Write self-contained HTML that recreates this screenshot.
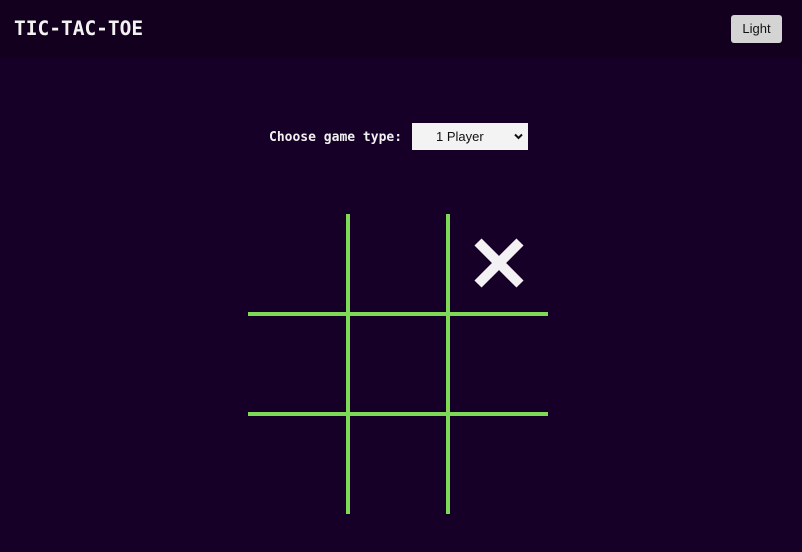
<!DOCTYPE html>
<html><head><style>
body{margin:0;width:802px;height:552px;background:#170027;overflow:hidden;font-family:"DejaVu Sans Mono","Liberation Mono",monospace}
.hdr{height:58px;background:#12001e;position:relative}
.t{position:absolute;left:14px;top:17px;color:#f2f2f2;font-weight:bold;font-size:19.5px}
.btn{position:absolute;left:731px;top:15px;width:51px;height:28px;background:#d4d4d4;border-radius:3px;font-family:"Liberation Sans",sans-serif;font-size:13px;color:#111;text-align:center;line-height:28px}
.lbl{position:absolute;left:269px;top:130px;color:#f0f0f0;font-weight:bold;font-size:13px}
.sel{position:absolute;left:412px;top:123px;width:116px;height:27px;background:#f3f3f3;font-family:"Liberation Sans",sans-serif;font-size:13px;color:#111}
.sel span{position:absolute;left:24px;top:6px}
.g{position:absolute;background:#7ed957}
</style></head><body>
<div class="hdr"><div class="t">TIC-TAC-TOE</div><div class="btn">Light</div></div>
<div class="lbl">Choose game type:</div>
<div class="sel"><span>1 Player</span><svg style="position:absolute;left:102px;top:10px" width="9" height="7" viewBox="0 0 9 7"><path d="M1 1.5L4.5 5L8 1.5" stroke="#111" stroke-width="2" fill="none"/></svg></div>
<div class="g" style="left:346px;top:214px;width:4px;height:300px"></div>
<div class="g" style="left:446px;top:214px;width:4px;height:300px"></div>
<div class="g" style="left:248px;top:312px;width:300px;height:4px"></div>
<div class="g" style="left:248px;top:412px;width:300px;height:4px"></div>
<svg style="position:absolute;left:470px;top:234px" width="58" height="58"><path d="M8 8L50 50M50 8L8 50" stroke="#f4f1f4" stroke-width="10"/></svg>
</body></html>
